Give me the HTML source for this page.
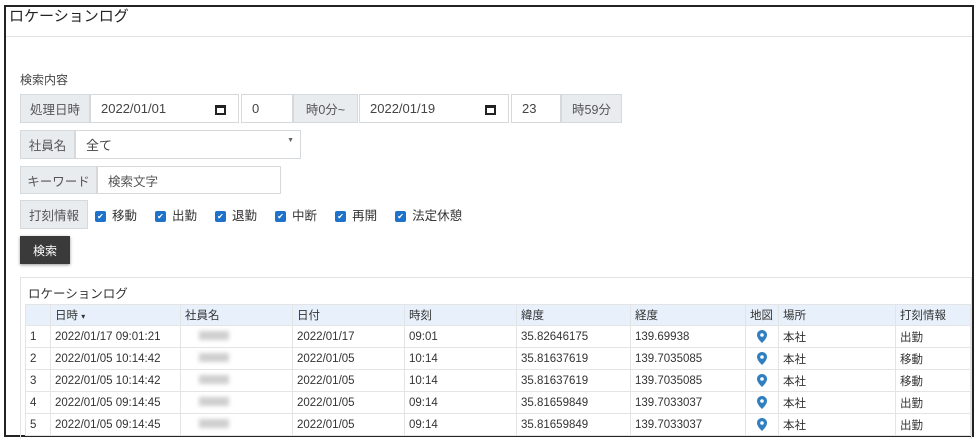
<!DOCTYPE html>
<html><head><meta charset="utf-8"><style>
*{box-sizing:border-box;margin:0;padding:0}
body{width:980px;height:441px;background:#fff;font-family:"Liberation Sans","Noto Sans CJK JP",sans-serif;color:#333;position:relative;overflow:hidden;font-size:12px}
.frame{position:absolute;left:4px;top:5px;width:970px;height:432px;border:2px solid #222;border-right-width:2px}
.abs{position:absolute}
.title{left:9px;top:5px;font-size:15px;color:#222}
.sep{left:6px;top:36px;width:966px;height:1px;background:#e3e3e3}
.lbl{background:#e9ecef;border:1px solid #d6d9dc;color:#555;display:flex;align-items:center;justify-content:center;font-size:12.5px}
.inp{background:#fff;border:1px solid #d6d9dc;display:flex;align-items:center;padding-left:10px;font-size:13px;color:#444}
.cal{position:absolute;right:12px;top:10px;width:11px;height:10px;border:2px solid #222;border-top-width:3px}
.cb{display:inline-block;width:11px;height:11px;background:#1e72c9;border-radius:2px;color:#fff;font-size:8px;line-height:11px;text-align:center;vertical-align:middle;margin-right:6px}
.cbs{left:95px;top:205px;font-size:12.5px;color:#333}
.cbs span.i{margin-right:18px}
.btn{left:20px;top:236px;width:50px;height:28px;background:#3a3a3a;color:#fff;font-size:12px;display:flex;align-items:center;justify-content:center;box-shadow:0 1px 3px rgba(0,0,0,.4)}
.panel{left:20px;top:277px;width:952px;height:162px;border:1px solid #e3e3e3;border-bottom:none}
table{position:absolute;left:25px;top:304px;border-collapse:collapse;font-size:11.5px;color:#333}
td,th{height:22px;border:1px solid #e4e4e4;padding:0 4px;text-align:left;font-weight:normal;white-space:nowrap}
th{background:#e8f1fb;height:21px}
.blur{display:inline-block;width:30px;height:9px;background:#cfcfcf;filter:blur(2px);margin-left:14px}
.pin{display:block;margin:0 auto}
</style></head><body>
<div class="frame"></div>
<div class="abs title">ロケーションログ</div>
<div class="abs sep"></div>
<div class="abs" style="left:20px;top:71px;font-size:12px;color:#444">検索内容</div>

<div class="abs lbl" style="left:20px;top:94px;width:70px;height:29px">処理日時</div>
<div class="abs inp" style="left:90px;top:94px;width:149px;height:29px">2022/01/01<div class="cal"></div></div>
<div class="abs inp" style="left:241px;top:94px;width:52px;height:29px">0</div>
<div class="abs lbl" style="left:293px;top:94px;width:65px;height:29px">時0分~</div>
<div class="abs inp" style="left:359px;top:94px;width:150px;height:29px">2022/01/19<div class="cal"></div></div>
<div class="abs inp" style="left:511px;top:94px;width:50px;height:29px">23</div>
<div class="abs lbl" style="left:561px;top:94px;width:61px;height:29px">時59分</div>

<div class="abs lbl" style="left:20px;top:130px;width:55px;height:29px">社員名</div>
<div class="abs inp" style="left:75px;top:130px;width:226px;height:29px">全て<span style="position:absolute;right:6px;top:6px;font-size:7px;color:#666">▼</span></div>

<div class="abs lbl" style="left:20px;top:166px;width:77px;height:28px">キーワード</div>
<div class="abs inp" style="left:97px;top:166px;width:184px;height:28px;color:#555;font-size:12.5px">検索文字</div>

<div class="abs lbl" style="left:20px;top:200px;width:68px;height:29px">打刻情報</div>
<div class="abs cbs"><span class="cb">✔</span><span class="i">移動</span><span class="cb">✔</span><span class="i">出勤</span><span class="cb">✔</span><span class="i">退勤</span><span class="cb">✔</span><span class="i">中断</span><span class="cb">✔</span><span class="i">再開</span><span class="cb">✔</span><span class="i">法定休憩</span></div>

<div class="abs btn">検索</div>

<div class="abs panel"></div>
<div class="abs" style="left:28px;top:283px;font-size:12.5px;color:#333">ロケーションログ</div>

<table>
<tr><th style="width:25px"></th><th style="width:130px">日時 <span style="font-size:8px">▾</span></th><th style="width:112px">社員名</th><th style="width:112px">日付</th><th style="width:112px">時刻</th><th style="width:114px">緯度</th><th style="width:115px">経度</th><th style="width:33px">地図</th><th style="width:117px">場所</th><th style="width:75px">打刻情報</th></tr>
<tr><td>1</td><td>2022/01/17 09:01:21</td><td><span class="blur"></span></td><td>2022/01/17</td><td>09:01</td><td>35.82646175</td><td>139.69938</td><td><svg class="pin" width="10" height="13" viewBox="0 0 10 13"><path d="M5 0C2.2 0 0 2.2 0 5c0 3.5 5 8 5 8s5-4.5 5-8C10 2.2 7.8 0 5 0z" fill="#2f7fc1"/><circle cx="5" cy="5" r="1.8" fill="#fff"/></svg></td><td>本社</td><td>出勤</td></tr>
<tr><td>2</td><td>2022/01/05 10:14:42</td><td><span class="blur"></span></td><td>2022/01/05</td><td>10:14</td><td>35.81637619</td><td>139.7035085</td><td><svg class="pin" width="10" height="13" viewBox="0 0 10 13"><path d="M5 0C2.2 0 0 2.2 0 5c0 3.5 5 8 5 8s5-4.5 5-8C10 2.2 7.8 0 5 0z" fill="#2f7fc1"/><circle cx="5" cy="5" r="1.8" fill="#fff"/></svg></td><td>本社</td><td>移動</td></tr>
<tr><td>3</td><td>2022/01/05 10:14:42</td><td><span class="blur"></span></td><td>2022/01/05</td><td>10:14</td><td>35.81637619</td><td>139.7035085</td><td><svg class="pin" width="10" height="13" viewBox="0 0 10 13"><path d="M5 0C2.2 0 0 2.2 0 5c0 3.5 5 8 5 8s5-4.5 5-8C10 2.2 7.8 0 5 0z" fill="#2f7fc1"/><circle cx="5" cy="5" r="1.8" fill="#fff"/></svg></td><td>本社</td><td>移動</td></tr>
<tr><td>4</td><td>2022/01/05 09:14:45</td><td><span class="blur"></span></td><td>2022/01/05</td><td>09:14</td><td>35.81659849</td><td>139.7033037</td><td><svg class="pin" width="10" height="13" viewBox="0 0 10 13"><path d="M5 0C2.2 0 0 2.2 0 5c0 3.5 5 8 5 8s5-4.5 5-8C10 2.2 7.8 0 5 0z" fill="#2f7fc1"/><circle cx="5" cy="5" r="1.8" fill="#fff"/></svg></td><td>本社</td><td>出勤</td></tr>
<tr><td>5</td><td>2022/01/05 09:14:45</td><td><span class="blur"></span></td><td>2022/01/05</td><td>09:14</td><td>35.81659849</td><td>139.7033037</td><td><svg class="pin" width="10" height="13" viewBox="0 0 10 13"><path d="M5 0C2.2 0 0 2.2 0 5c0 3.5 5 8 5 8s5-4.5 5-8C10 2.2 7.8 0 5 0z" fill="#2f7fc1"/><circle cx="5" cy="5" r="1.8" fill="#fff"/></svg></td><td>本社</td><td>出勤</td></tr>
</table>
</body></html>
